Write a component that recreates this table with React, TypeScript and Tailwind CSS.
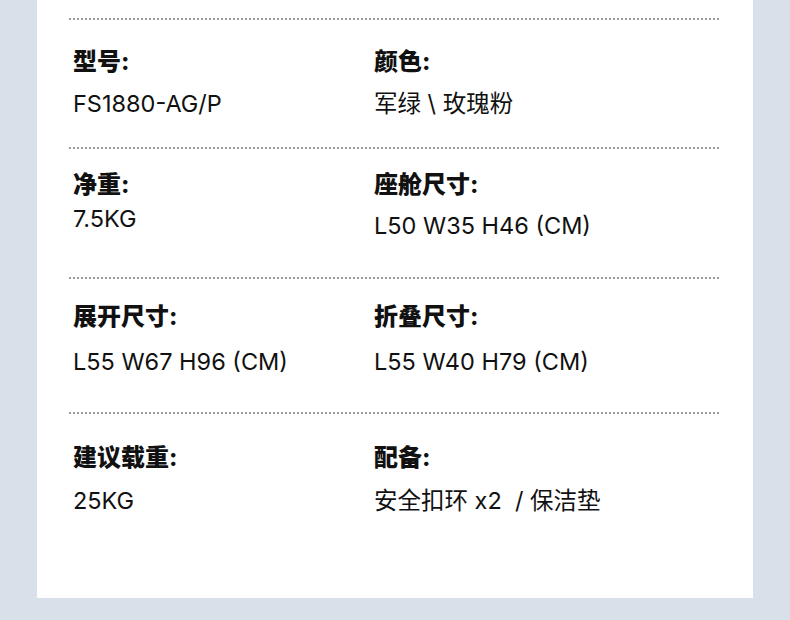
import React from "react";

const font = { fontFamily: "Inter, 'Noto Sans CJK SC', sans-serif" };

function Dots() {
  return (
    <div className="h-[2px] w-full bg-[repeating-linear-gradient(to_right,#9a9a9a_0px,#9a9a9a_2px,transparent_2px,transparent_4px)]" />
  );
}

type Cell = { label: string; value: string; gap: string };

function Item({ c }: { c: Cell }) {
  return (
    <div className="flex flex-col">
      <div className="text-[24px] leading-[24px] font-extrabold text-[#111]">{c.label}</div>
      <div className={`text-[23.5px] leading-[24px] text-[#111] ${c.gap}`}>{c.value}</div>
    </div>
  );
}

export default function App() {
  return (
    <div className="w-[790px] h-[620px] bg-[#d8e1ea] overflow-hidden" style={font}>
      <div className="ml-[37px] w-[716px] h-[598px] bg-white px-8 pt-[18px]">
        <div className="h-[129px]">
          <Dots />
          <div className="grid grid-cols-[301px_1fr] pl-1 pt-[30px]">
            <Item c={{ label: "型号:", value: "FS1880-AG/P", gap: "mt-[18px]" }} />
            <Item c={{ label: "颜色:", value: "军绿 \\ 玫瑰粉", gap: "mt-[18px]" }} />
          </div>
        </div>
        <div className="h-[130px]">
          <Dots />
          <div className="grid grid-cols-[301px_1fr] pl-1 pt-[24px]">
            <Item c={{ label: "净重:", value: "7.5KG", gap: "mt-[10px]" }} />
            <Item c={{ label: "座舱尺寸:", value: "L50 W35 H46 (CM)", gap: "mt-[17px]" }} />
          </div>
        </div>
        <div className="h-[135px]">
          <Dots />
          <div className="grid grid-cols-[301px_1fr] pl-1 pt-[26px]">
            <Item c={{ label: "展开尺寸:", value: "L55 W67 H96 (CM)", gap: "mt-[21px]" }} />
            <Item c={{ label: "折叠尺寸:", value: "L55 W40 H79 (CM)", gap: "mt-[21px]" }} />
          </div>
        </div>
        <div>
          <Dots />
          <div className="grid grid-cols-[301px_1fr] pl-1 pt-[32px]">
            <Item c={{ label: "建议载重:", value: "25KG", gap: "mt-[19px]" }} />
            <Item c={{ label: "配备:", value: "安全扣环 x2  / 保洁垫", gap: "mt-[19px] whitespace-pre" }} />
          </div>
        </div>
      </div>
    </div>
  );
}
